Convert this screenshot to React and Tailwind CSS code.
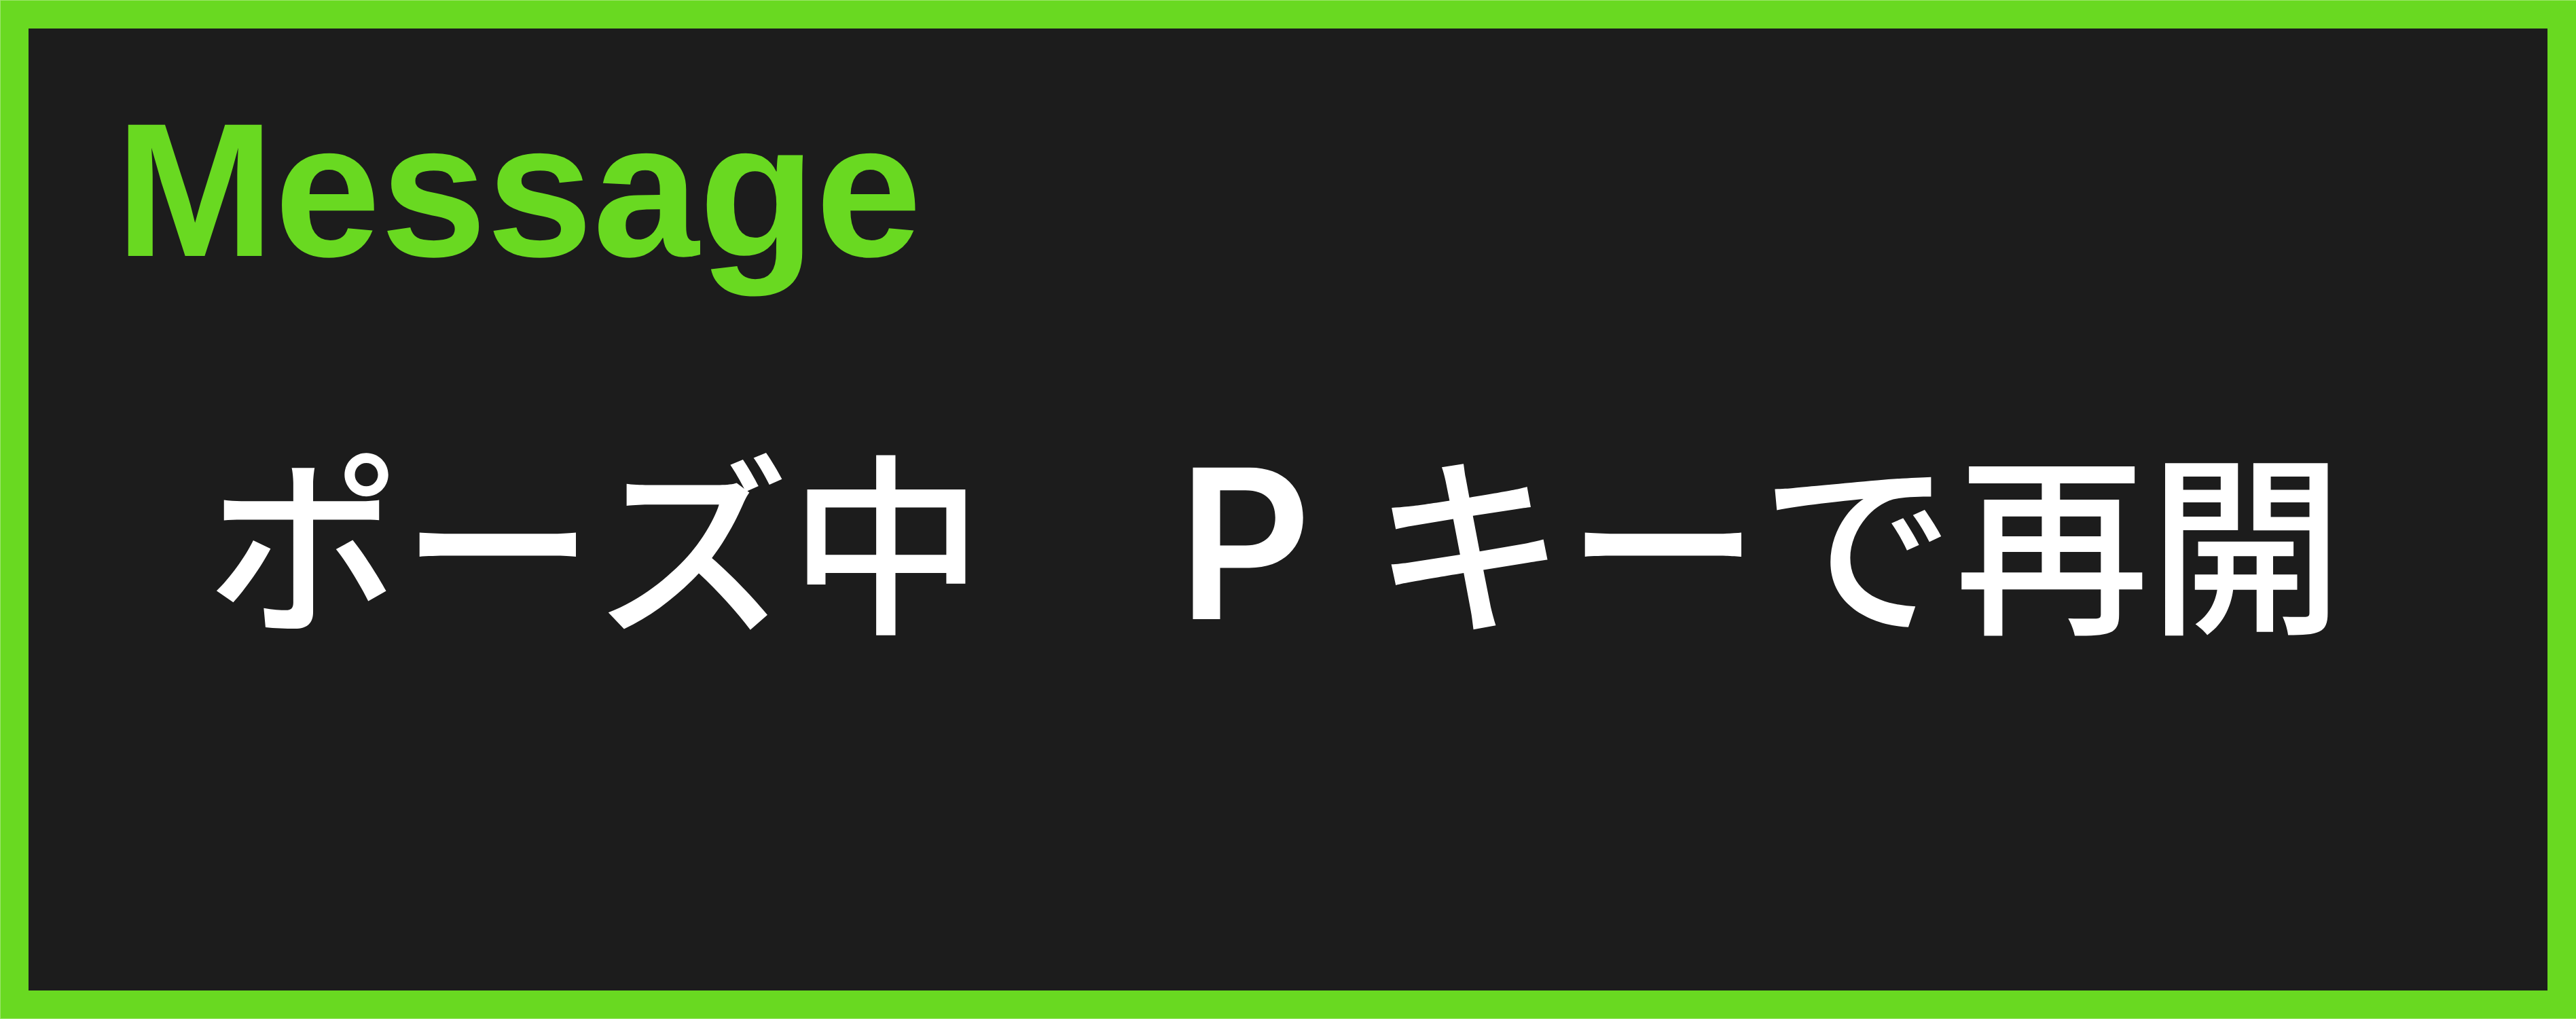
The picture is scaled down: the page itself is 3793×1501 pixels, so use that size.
export default function App() {
  return (
    <main className="flex min-h-screen flex-col border-y border-l border-[#9ce56b]">
      <section className="flex grow flex-col border-[41px] border-r-[42px] border-[#69d921] bg-[#1c1c1c] pt-[78px] pl-[128px]">
        <h1 className="font-['Liberation_Sans',sans-serif] text-[281px] leading-[320px] font-bold whitespace-nowrap text-[#69d921]">Message</h1>
        <p className="mt-[147px] pl-[134px] font-['Noto_Sans_CJK_JP',sans-serif] text-[286px] leading-[400px] font-medium whitespace-nowrap text-white [font-kerning:none]">
          ポーズ中　<span className="inline-block w-[286px] font-['Inter',sans-serif] text-[307px] leading-[400px] font-semibold">P</span>キーで再開
        </p>
      </section>
    </main>
  );
}
